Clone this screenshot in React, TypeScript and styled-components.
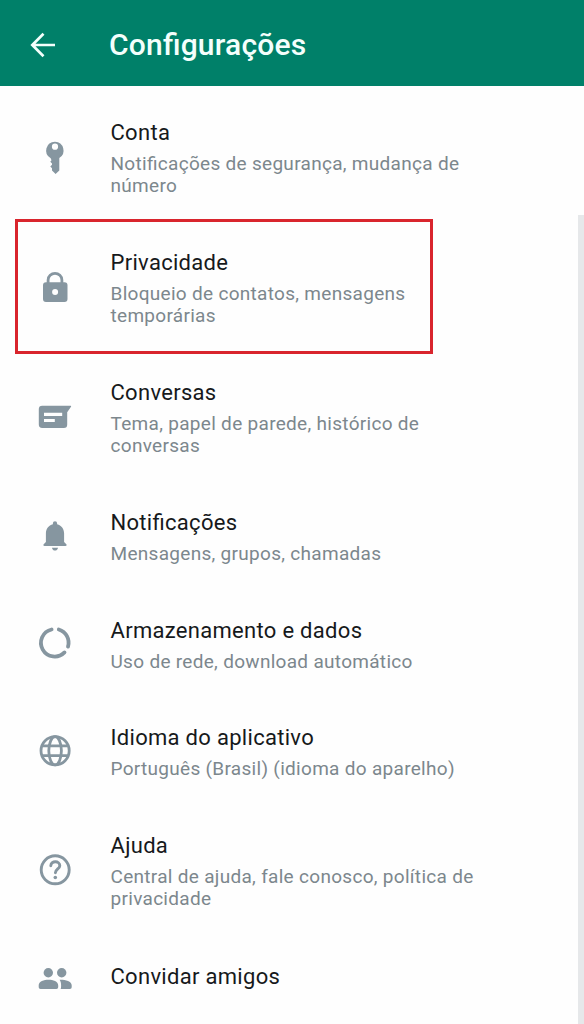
import React from 'react';
import styled, { createGlobalStyle } from 'styled-components';

const GlobalStyle = createGlobalStyle`
  * { box-sizing: border-box; }
  body { margin: 0; background: #fefefe; font-family: Roboto, "Liberation Sans", sans-serif; }
`;

const Screen = styled.div`
  position: relative;
  width: 584px;
  height: 1024px;
  overflow: hidden;
  background: #fefefe;
`;

const Header = styled.header`
  display: flex;
  align-items: center;
  height: 86px;
  padding: 3px 0 0 23px;
  background: #008069;
`;

const BackButton = styled.button`
  width: 40px;
  height: 40px;
  padding: 0;
  border: 0;
  background: none;
  color: #f4fffc;
`;

const HeaderTitle = styled.h1<{ $spacing: number }>`
  margin: 0 0 0 46px;
  color: #f4fffc;
  font-size: 30px;
  line-height: 36px;
  font-weight: 500;
  white-space: nowrap;
  letter-spacing: ${p => p.$spacing}px;
  font-feature-settings: "liga" 1;
`;

const List = styled.main`
  padding-top: 7px;
`;

const Row = styled.section<{ $height: number }>`
  position: relative;
  display: flex;
  height: ${p => p.$height}px;
`;

const IconSlot = styled.div`
  display: flex;
  align-items: center;
  flex: none;
  width: 75.5px;
  padding-left: 35px;
  color: #8696a0;
`;

const Icon = styled.svg`
  display: block;
  flex: none;
  width: 40px;
  height: 40px;
`;

const Texts = styled.div`
  padding: 26px 0 0 35px;
  white-space: nowrap;
`;

const Title = styled.h2<{ $spacing: number }>`
  margin: 0 0 6px;
  color: #16191b;
  font-size: 22px;
  line-height: 28px;
  font-weight: 400;
  letter-spacing: ${p => p.$spacing}px;
  font-feature-settings: "liga" 1;
`;

const Detail = styled.p<{ $spacing: number }>`
  margin: 0;
  color: #7c878d;
  font-size: 19px;
  line-height: 22.3px;
  letter-spacing: ${p => p.$spacing}px;
  font-feature-settings: "liga" 1;
`;

const Highlight = styled.div`
  position: absolute;
  left: 15px;
  top: -4px;
  width: 418px;
  height: 135px;
  border: 3px solid #d9252d;
`;

const ScrollBar = styled.div`
  position: absolute;
  right: 0;
  top: 215px;
  bottom: 0;
  width: 6px;
  background: #e6e8ea;
`;

const icons = {
  key: (
    <path fill="currentColor" fillRule="evenodd" d="M20 3.7a8.8 8.8 0 0 1 4.3 16.3v12.4L20.6 36 17 32.4v-2.2l-1.7-1.7 1.7-1.8v-1.3l-1.7-1.7 1.2-1.5-.8-2A8.8 8.8 0 0 1 20 3.7zm0 1.9a3.1 3.1 0 1 0 0 6.2 3.1 3.1 0 0 0 0-6.2z" />
  ),
  lock: (
    <>
      <path fill="none" stroke="currentColor" strokeWidth="2.8" d="M13.1 16v-4.1a6.9 6.5 0 0 1 13.8 0V16" />
      <path fill="currentColor" fillRule="evenodd" d="M11 14.3h18.5a3 3 0 0 1 3 3V31a3 3 0 0 1-3 3H11a3 3 0 0 1-3-3V17.3a3 3 0 0 1 3-3zm9.1 6.6a3 3 0 1 0 0 6 3 3 0 0 0 0-6z" />
    </>
  ),
  chat: (
    <path fill="currentColor" fillRule="evenodd" d="M7.2 7.7h28.3a.6.6 0 0 1 .5 1l-3.8 5.5v12.3A3.4 3.4 0 0 1 28.8 30H7.2a3.4 3.4 0 0 1-3.4-3.4V11.1a3.4 3.4 0 0 1 3.4-3.4zM9 14.7V18h18.2v-3.3zM9 21v3.1h10.8V21z" />
  ),
  bell: (
    <path fill="currentColor" d="M20 4.2a2.1 2.1 0 0 1 2.1 2.1v1c4.3 1.1 7 4.5 7 9.2v8.6l2.2 2.2c.7.7.2 1.8-.8 1.8h-21c-1 0-1.5-1.1-.8-1.8l2.2-2.2v-8.6c0-4.7 2.7-8.1 7-9.2v-1A2.1 2.1 0 0 1 20 4.2zM17 30.7h6c-.3 1.8-1.4 2.9-3 2.9s-2.7-1.1-3-2.9z" />
  ),
  data: (
    <path fill="none" stroke="currentColor" strokeWidth="3.8" strokeLinecap="round" d="M23.8 5.5A13.7 13.7 0 0 1 33 22.6M29.5 28.4A13.7 13.7 0 1 1 16.6 5.5" />
  ),
  globe: (
    <g fill="none" stroke="currentColor" strokeWidth="2.8">
      <circle cx="20.1" cy="18.8" r="14.1" />
      <ellipse cx="20.1" cy="18.8" rx="6.3" ry="14.1" />
      <path d="M7.4 13.9h25.4M7.4 23.7h25.4" />
    </g>
  ),
  help: (
    <g fill="none" stroke="currentColor" strokeWidth="2.9">
      <circle cx="20.2" cy="18.8" r="14" />
      <path strokeLinecap="round" d="M15.8 14.7c.2-5.2 9-5.2 9 0 0 3-4.4 3.6-4.4 7.1" />
      <circle cx="20.3" cy="26.5" r="1.8" fill="currentColor" stroke="none" />
    </g>
  ),
  people: (
    <g fill="currentColor">
      <circle cx="13.3" cy="15.7" r="4.7" />
      <circle cx="26.7" cy="15.7" r="4.7" />
      <path d="M3.7 28.2c0-3.8 5.3-5.5 9.8-5.5s9.7 1.7 9.7 5.5v2a1.8 1.8 0 0 1-1.8 1.8H5.5a1.8 1.8 0 0 1-1.8-1.8zM24.6 22.7c5.4-.2 12.1 1.5 12.1 5.5v2a1.8 1.8 0 0 1-1.8 1.8h-9.3c.5-1 .5-2.2.5-3.8 0-2.1-.4-4-1.5-5.5z" />
    </g>
  ),
};

type Item = {
  icon: keyof typeof icons;
  title: string;
  detail: string[];
  height: number;
  selected?: boolean;
};

const items: Item[] = [
  { icon: 'key', title: 'Conta', detail: ['Notificações de segurança, mudança de', 'número'], height: 130 },
  { icon: 'lock', title: 'Privacidade', detail: ['Bloqueio de contatos, mensagens', 'temporárias'], height: 130, selected: true },
  { icon: 'chat', title: 'Conversas', detail: ['Tema, papel de parede, histórico de', 'conversas'], height: 130 },
  { icon: 'bell', title: 'Notificações', detail: ['Mensagens, grupos, chamadas'], height: 107.6 },
  { icon: 'data', title: 'Armazenamento e dados', detail: ['Uso de rede, download automático'], height: 107.6 },
  { icon: 'globe', title: 'Idioma do aplicativo', detail: ['Português (Brasil) (idioma do aparelho)'], height: 107.6 },
  { icon: 'help', title: 'Ajuda', detail: ['Central de ajuda, fale conosco, política de', 'privacidade'], height: 131 },
  { icon: 'people', title: 'Convidar amigos', detail: [], height: 80 },
];

export default function App() {
  return (
    <Screen>
      <GlobalStyle />
      <Header>
        <BackButton aria-label="Voltar">
          <Icon viewBox="0 0 40 40">
            <path fill="none" stroke="currentColor" strokeWidth="2.7" d="M32 20H9.5M20.5 8.8 9.3 20l11.2 11.2" />
          </Icon>
        </BackButton>
        <HeaderTitle $spacing={0.2}>Configurações</HeaderTitle>
      </Header>
      <List>
        {items.map(item => (
          <Row key={item.title} $height={item.height}>
            <IconSlot>
              <Icon viewBox="0 0 40 40">{icons[item.icon]}</Icon>
            </IconSlot>
            <Texts>
              <Title $spacing={0.3}>{item.title}</Title>
              {item.detail.map(line => (
                <Detail key={line} $spacing={0.3}>{line}</Detail>
              ))}
            </Texts>
            {item.selected && <Highlight />}
          </Row>
        ))}
      </List>
      <ScrollBar />
    </Screen>
  );
}
